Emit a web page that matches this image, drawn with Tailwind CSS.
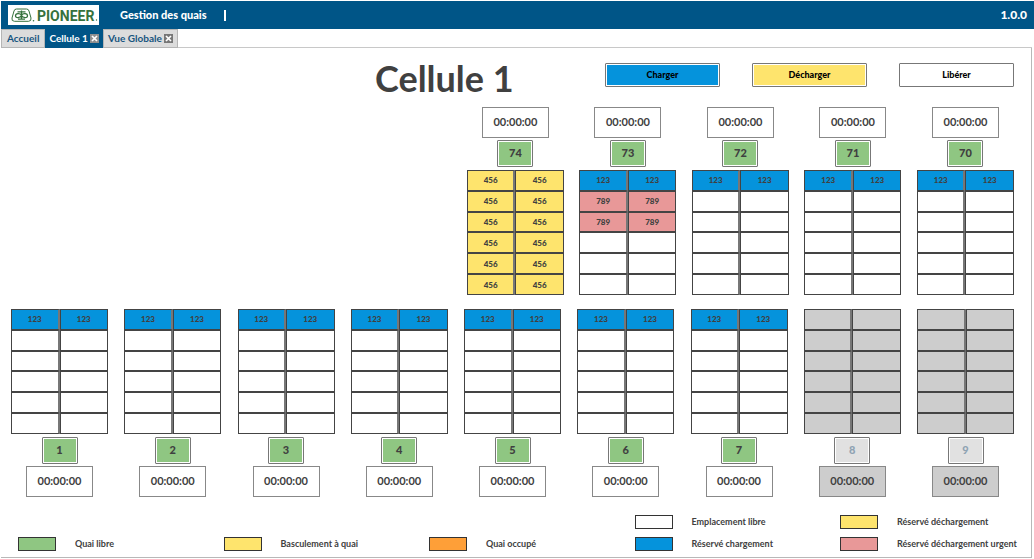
<!DOCTYPE html>
<html lang="fr">
<head>
<meta charset="utf-8">
<meta name="viewport" content="width=device-width, initial-scale=1">
<title>Gestion des quais - Cellule 1</title>
<script src="https://cdn.jsdelivr.net/npm/@tailwindcss/browser@4"></script>
</head>
<body class="bg-white font-['Lato','Liberation_Sans',sans-serif] font-bold text-[#404040] pt-px pl-px">
<header class="flex h-7 items-center bg-[#005587] px-[7px] text-[11px] font-black text-white">
  <svg class="h-5 w-[91px] shrink-0" viewBox="0 0 91 20" role="img" aria-label="Pioneer">
    <rect width="91" height="20" fill="#fff"/>
    <path d="M8.500 4H18.500Q20.500 4 21 6L23 13Q23.500 16.300 20.500 16.300H6.500Q3.300 16.300 4 13L6 6Q6.500 4 8.500 4Z" fill="#fff" stroke="#36713d" stroke-width="1"/>
    <path d="M13.500 5.500v8.500M9.500 6.800h8M13.500 10C12 8 7.500 8 7.500 10.800S12 13 13.500 10.500C15 13 19.500 13.500 19.500 10.800S15 8 13.500 10M10 14.200h7" fill="none" stroke="#36713d" stroke-width="1.300"/>
    <circle cx="25.500" cy="15.800" r=".8" fill="#36713d"/>
    <text x="29" y="15.500" font-family="Roboto, sans-serif" font-weight="700" font-size="14" fill="#36713d">PIONEER</text>
    <circle cx="88.500" cy="15" r=".7" fill="#36713d"/>
  </svg>
  <span class="ml-[21px]">Gestion des quais</span>
  <span class="ml-[17px] h-[11px] w-0.5 bg-white"></span>
  <span class="ml-auto text-[12px]">1.0.0</span>
</header>
<nav class="flex h-[19px] items-stretch text-[10px] text-[#17557f]" aria-label="Onglets">
  <a href="#accueil" class="flex items-center border border-[#b5b5b5] bg-[#dcdcdc] px-[5px]">Accueil</a>
  <div class="flex items-center gap-0.5 bg-[#005587] px-1 text-white">
    <a href="#cellule1" aria-current="page">Cellule 1</a>
    <button aria-label="Fermer Cellule 1" class="flex size-[9px] items-center justify-center bg-[#8f8f8f]"><svg class="size-[7px]" viewBox="0 0 7 7"><path d="M1 1l5 5M6 1L1 6" stroke="#fff" stroke-width="1.700"/></svg></button>
  </div>
  <div class="flex items-center gap-0.5 border border-[#b5b5b5] bg-[#dcdcdc] px-1">
    <a href="#vue">Vue Globale</a>
    <button aria-label="Fermer Vue Globale" class="flex size-[9px] items-center justify-center bg-[#777]"><svg class="size-[7px]" viewBox="0 0 7 7"><path d="M1 1l5 5M6 1L1 6" stroke="#fff" stroke-width="1.700"/></svg></button>
  </div>
  <span class="mr-0.5 flex-1 border-b border-[#c8c8c8]"></span>
</nav>
<main class="mr-0.5 border-r border-b border-[#b8b8b8] pr-[17px] pb-[6px] pl-2.5">
  <div class="flex items-center justify-between pl-[364px] pt-[7px]">
    <h1 class="text-[36px] leading-[46px]">Cellule 1</h1>
    <div class="-mt-1.5 flex gap-8 text-[9px] font-black text-black">
      <button class="h-6 w-[115px] rounded-[1px] border border-[#777] bg-white p-px"><span class="flex h-full items-center justify-center bg-[#0593dc]">Charger</span></button>
      <button class="h-6 w-[115px] rounded-[1px] border border-[#777] bg-white p-px"><span class="flex h-full items-center justify-center bg-[#fee46d]">Décharger</span></button>
      <button class="h-6 w-[115px] rounded-[1px] border border-[#777] bg-white p-px"><span class="flex h-full items-center justify-center">Libérer</span></button>
    </div>
  </div>
  <section id="top" class="mt-[6px] ml-auto flex w-6/11 justify-between" aria-label="Quais 74 à 70"></section>
  <section id="bottom" class="mt-3.5 flex justify-between" aria-label="Quais 1 à 9"></section>
  <ul class="mt-[18px] ml-[7px] grid grid-cols-[1fr_1fr_1fr_1fr_174px] gap-y-2 text-[9px] leading-[14px]">
    <li class="col-start-4 flex gap-[19px]"><span class="h-3.5 w-[38px] shrink-0 border border-[#333]"></span>Emplacement libre</li>
    <li class="flex gap-[19px]"><span class="h-3.5 w-[38px] shrink-0 border border-[#333] bg-[#fee46d]"></span>Réservé déchargement</li>
    <li class="flex gap-[19px]"><span class="h-3.5 w-[38px] shrink-0 border border-[#333] bg-[#8fc682]"></span>Quai libre</li>
    <li class="flex gap-[19px]"><span class="h-3.5 w-[38px] shrink-0 border border-[#333] bg-[#fee46d]"></span>Basculement à quai</li>
    <li class="flex gap-[19px]"><span class="h-3.5 w-[38px] shrink-0 border border-[#333] bg-[#fe9f38]"></span>Quai occupé</li>
    <li class="flex gap-[19px]"><span class="h-3.5 w-[38px] shrink-0 border border-[#333] bg-[#0593dc]"></span>Réservé chargement</li>
    <li class="flex gap-[19px] whitespace-nowrap"><span class="h-3.5 w-[38px] shrink-0 border border-[#333] bg-[#e89898]"></span>Réservé déchargement urgent</li>
  </ul>
</main>
<script>
const fills = { 456: 'bg-[#fee46d]', 123: 'bg-[#0593dc]', 789: 'bg-[#e89898]', free: 'bg-white', off: 'bg-[#cdcdcd]' };
const label = v => v === 'off' || v === 'free' ? '&nbsp;' : v;
const timer = off => `<time class="flex h-[31px] w-[67px] items-center justify-center border border-[#888] text-[11px] ${off ? 'bg-[#cdcdcd]' : 'bg-white'}">00:00:00</time>`;
const badge = (n, off) => `<button ${off ? 'disabled' : ''} class="h-[27px] w-9 rounded-[1px] border border-[#777] bg-white p-px text-[11px] font-black ${off ? 'text-[#8fa3b3]' : ''}"><span class="flex h-full items-center justify-center ${off ? 'bg-[#e1e1e1]' : 'bg-[#8fc682]'}">${n}</span></button>`;
const slots = (n, rows) => `<table aria-label="Quai ${n}" class="h-[125px] w-[97px] table-fixed border-separate border-spacing-0 text-center text-[8px] leading-[10px] font-black">${rows.map(v =>
  `<tr><td class="border border-r-2 border-[#444] border-r-[#777] p-0 ${fills[v]}">${label(v)}</td><td class="border border-[#444] p-0 ${fills[v]}">${label(v)}</td></tr>`).join('')}</table>`;
const one = ['123', 'free', 'free', 'free', 'free', 'free'];
const docks = { 74: Array(6).fill('456'), 73: ['123', '789', '789', 'free', 'free', 'free'] };
document.getElementById('top').innerHTML = [74, 73, 72, 71, 70].map(n =>
  `<div class="flex flex-col items-center">${timer()}<div class="mt-0.5 mb-[3px] flex">${badge(n)}</div>${slots(n, docks[n] || one)}</div>`).join('');
document.getElementById('bottom').innerHTML = [1, 2, 3, 4, 5, 6, 7, 8, 9].map(n => {
  const off = n > 7;
  return `<div class="flex flex-col items-center">${slots(n, off ? Array(6).fill('off') : one)}<div class="mt-[3px] mb-0.5 flex">${badge(n, off)}</div>${timer(off)}</div>`;
}).join('');
</script>
</body>
</html>
